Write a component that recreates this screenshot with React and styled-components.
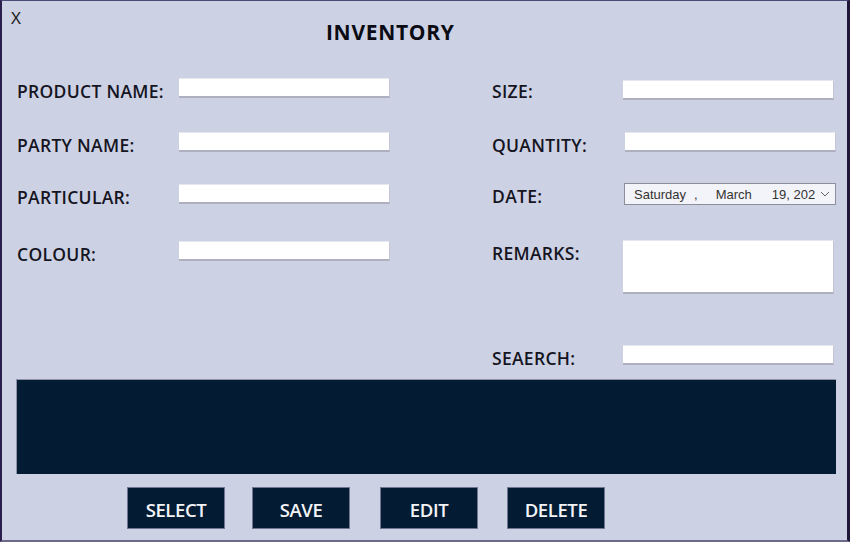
import styled, { createGlobalStyle } from 'styled-components';

const GlobalStyle = createGlobalStyle`
  html, body { margin: 0; padding: 0; background: #cdd1e4; }
  * { box-sizing: border-box; }
`

const Window = styled.div`
  width: 850px;
  height: 542px;
  background: #cdd1e4;
  border-top: 1px solid #4a4a78;
  border-left: 2px solid #2b1d4c;
  border-right: 3px solid #1f1638;
  border-bottom: 2px solid #6c6a86;
  font-family: "Open Sans", "Noto Sans", sans-serif;
  color: #111;
  display: flex;
  flex-direction: column;
`

const Header = styled.div`
  display: flex;
  align-items: flex-start;
  height: 77px;
`

const Close = styled.span`
  font-family: "Noto Sans", sans-serif;
  font-size: 17px;
  line-height: 20px;
  margin: 7px 0 0 9px;
  color: #222;
`

const Title = styled.h1`
  margin: 16px 0 0 305px;
  font-size: 21px;
  font-weight: 700;
  line-height: 30px;
  letter-spacing: 0.7px;
  color: #0b0b14;
`

const Form = styled.div`
  display: grid;
  grid-template-columns: 475px 1fr;
  padding-left: 15px;
  height: 301px;
`

const Column = styled.div`
  display: flex;
  flex-direction: column;
`

const Field = styled.div`
  display: flex;
  align-items: flex-start;
  height: ${p => p.$h}px;
`

const Label = styled.label`
  width: ${p => p.$w}px;
  flex-shrink: 0;
  font-size: 17.5px;
  font-weight: 600;
  line-height: 20px;
  letter-spacing: 0.3px;
  padding-top: 3px;
  color: #15151f;
  white-space: nowrap;
`

const Input = styled.div`
  width: ${p => p.$w || 211}px;
  height: ${p => p.$hh || 20}px;
  margin-top: ${p => p.$mt || 0}px;
  margin-left: ${p => p.$ml || 0}px;
  background: #fff;
  border-bottom: 2px solid #aeb0c0;
  border-right: 1px solid #c4c6d4;
  border-top: 1px solid #e6e8f0;
`

const DatePicker = styled.div`
  width: 212px;
  height: 22px;
  margin-left: 1px;
  background: #f3f4f9;
  border: 1px solid #8c8e9c;
  display: flex;
  align-items: center;
  font-family: "Liberation Sans", Arial, sans-serif;
  font-size: 13px;
  color: #333;
  padding: 0 5px 0 9px;
  white-space: nowrap;
`

const DatePart = styled.span`
  margin-right: ${p => p.$mr}px;
`

const Chevron = styled.svg`
  flex-shrink: 0;
  margin-left: auto;
`

const Panel = styled.div`
  margin: 0 11px 0 14px;
  height: 95px;
  background: #041c33;
  border-top: 1px solid #8d92a8;
  border-left: 1px solid #8d92a8;
`

const Buttons = styled.div`
  display: flex;
  padding-left: 125px;
  margin-top: 13px;
`

const Button = styled.button`
  width: 98px;
  height: 42px;
  margin-right: ${p => p.$mr}px;
  background: #041c33;
  border: 1px solid #6f7790;
  color: #f4f4f8;
  font-family: "Open Sans", "Noto Sans", sans-serif;
  font-weight: 600;
  font-size: 18.5px;
  letter-spacing: -0.4px;
  padding: 2px 0 0;
  cursor: pointer;
`

export default function App() {
  return (
    <Window>
      <GlobalStyle />
      <Header>
        <Close>X</Close>
        <Title>INVENTORY</Title>
      </Header>
      <Form>
        <Column>
          <Field $h={54}><Label $w={162}>PRODUCT NAME:</Label><Input /></Field>
          <Field $h={52}><Label $w={162}>PARTY NAME:</Label><Input /></Field>
          <Field $h={57}><Label $w={162}>PARTICULAR:</Label><Input /></Field>
          <Field $h={20}><Label $w={162}>COLOUR:</Label><Input /></Field>
        </Column>
        <Column>
          <Field $h={54}><Label $w={131}>SIZE:</Label><Input $mt={2} /></Field>
          <Field $h={51}><Label $w={131}>QUANTITY:</Label><Input $ml={2} /></Field>
          <Field $h={57}>
            <Label $w={131}>DATE:</Label>
            <DatePicker>
              <DatePart $mr={8}>Saturday</DatePart>
              <DatePart $mr={18}>,</DatePart>
              <DatePart $mr={20}>March</DatePart>
              <DatePart $mr={0}>19, 202</DatePart>
              <Chevron width="10" height="6" viewBox="0 0 10 6">
                <path d="M1 1 L5 5 L9 1" fill="none" stroke="#666" strokeWidth="1" />
              </Chevron>
            </DatePicker>
          </Field>
          <Field $h={105}><Label $w={131}>REMARKS:</Label><Input $hh={54} /></Field>
          <Field $h={20}><Label $w={131}>SEAERCH:</Label><Input /></Field>
        </Column>
      </Form>
      <Panel />
      <Buttons>
        <Button $mr={27}>SELECT</Button>
        <Button $mr={30}>SAVE</Button>
        <Button $mr={29}>EDIT</Button>
        <Button $mr={0}>DELETE</Button>
      </Buttons>
    </Window>
  );
}
